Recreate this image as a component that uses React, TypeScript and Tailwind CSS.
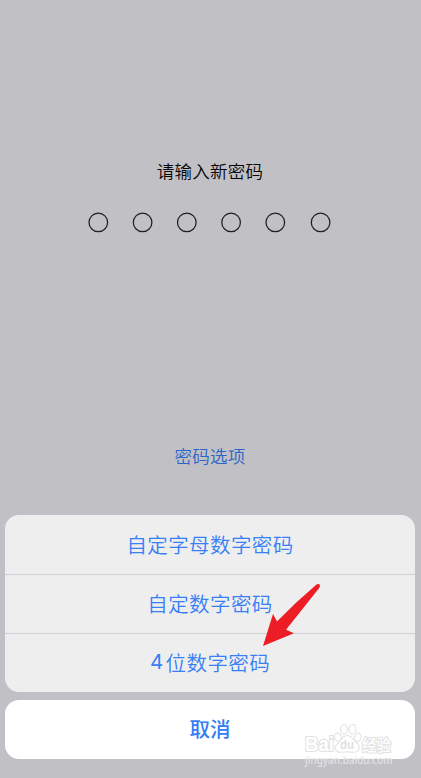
const options = [
  { digit: '', label: '自定字母数字密码' },
  { digit: '', label: '自定数字密码' },
  { digit: '4', label: '位数字密码' },
];

function PasscodeDots() {
  return (
    <svg className="mt-[28px] block h-[22px] w-[421px]" viewBox="0 0 421 22" fill="none" stroke="#202022" strokeWidth="1.25">
      {[98.3, 142.6, 186.8, 231.1, 275.3, 320.6].map((x) => (
        <circle key={x} cx={x} cy="11.4" r="9.3" />
      ))}
    </svg>
  );
}

function Arrow() {
  return (
    <svg className="pointer-events-none absolute left-[255px] top-[578px] h-[72px] w-[70px]" viewBox="0 0 70 72">
      <path d="M8 68 L18 36 L22 43.4 Q40 25 61.5 6.6 Q64 5.2 65 7.5 Q65 9 63.8 10.5 L31 51.8 L39 55.2 Z" fill="#ee1c24" />
    </svg>
  );
}

function Watermark() {
  return (
    <svg
      className="pointer-events-none absolute left-[295px] top-[715px] h-[58px] w-[110px]"
      viewBox="0 0 110 58"
      fontFamily="'Liberation Sans', 'Noto Sans CJK SC', sans-serif"
    >
      <g fill="#ffffff" stroke="#e2e2e4" strokeWidth="2.2" strokeLinejoin="round">
        <text x="10" y="36" fontSize="19.5" fontWeight="700" paintOrder="stroke" textLength="29" lengthAdjust="spacingAndGlyphs">Bai</text>
        <g strokeWidth="1.1">
          <ellipse cx="42.8" cy="22.2" rx="3.4" ry="4.1" transform="rotate(-15 42.8 22.2)" />
          <ellipse cx="49" cy="14.2" rx="3.4" ry="4.8" />
          <ellipse cx="57.5" cy="14.2" rx="3.4" ry="4.8" transform="rotate(10 57.5 14.2)" />
          <ellipse cx="62.8" cy="22.3" rx="3.2" ry="4.3" transform="rotate(12 62.8 22.3)" />
          <path d="M52.3 20.5 C57 20.5 58.5 25 61.5 27.5 C66.8 32 63.5 37.5 58.5 37.3 C54.5 36.7 50.5 36.7 46 37.3 C40 37.7 38.5 31.7 43 28.3 C47 25 47.2 20.5 52.3 20.5 Z" />
        </g>
        <text x="67" y="35.5" fontSize="15.5" fontWeight="500" paintOrder="stroke" textLength="29" lengthAdjust="spacingAndGlyphs">经验</text>
      </g>
      <text x="45" y="34.2" fontSize="12.5" fontWeight="700" fill="#e0e0e2" textLength="14" lengthAdjust="spacingAndGlyphs">du</text>
      <text x="10" y="48.8" fontSize="9.8" fontFamily="'Noto Sans', sans-serif" fontWeight="500" fill="#e3e3e6" textLength="87.5" lengthAdjust="spacing">jingyan.baidu.com</text>
    </svg>
  );
}

export default function App() {
  return (
    <main className="relative flex h-[778px] w-[421px] flex-col overflow-hidden bg-[#c1c0c5] font-['Noto_Sans_CJK_SC',sans-serif]">
      <h1 className="mt-[159px] pr-px text-center text-[17.5px] leading-6 font-[350] tracking-[0.25px] text-[#050505]">请输入新密码</h1>
      <PasscodeDots />
      <button className="mt-[211px] block w-full pr-px text-center text-[17.5px] leading-6 font-[350] tracking-[0.3px] text-[#2c65c9]">密码选项</button>
      <div className="mx-[5px] mt-[47px] w-[410px] shrink-0 overflow-hidden rounded-[14px] bg-[#eeeeef]">
        {options.map(({ digit, label }) => (
          <button
            key={label}
            className="flex h-[59px] w-full items-center justify-center border-t border-[#d0d0d3] pb-[3px] text-[20.5px] leading-6 font-[350] tracking-[0.4px] text-[#387ff5] first:border-t-transparent"
          >
            {digit && <span className="mr-[2px] font-['Inter',sans-serif] text-[20.5px] font-normal">{digit}</span>}
            {label}
          </button>
        ))}
      </div>
      <button className="mx-[5px] mt-2 flex h-[59px] w-[410px] shrink-0 items-center justify-center rounded-[14px] bg-white pb-[3px] text-[20.5px] leading-6 font-medium text-[#347cf6]">
        取消
      </button>
      <Arrow />
      <Watermark />
    </main>
  );
}
